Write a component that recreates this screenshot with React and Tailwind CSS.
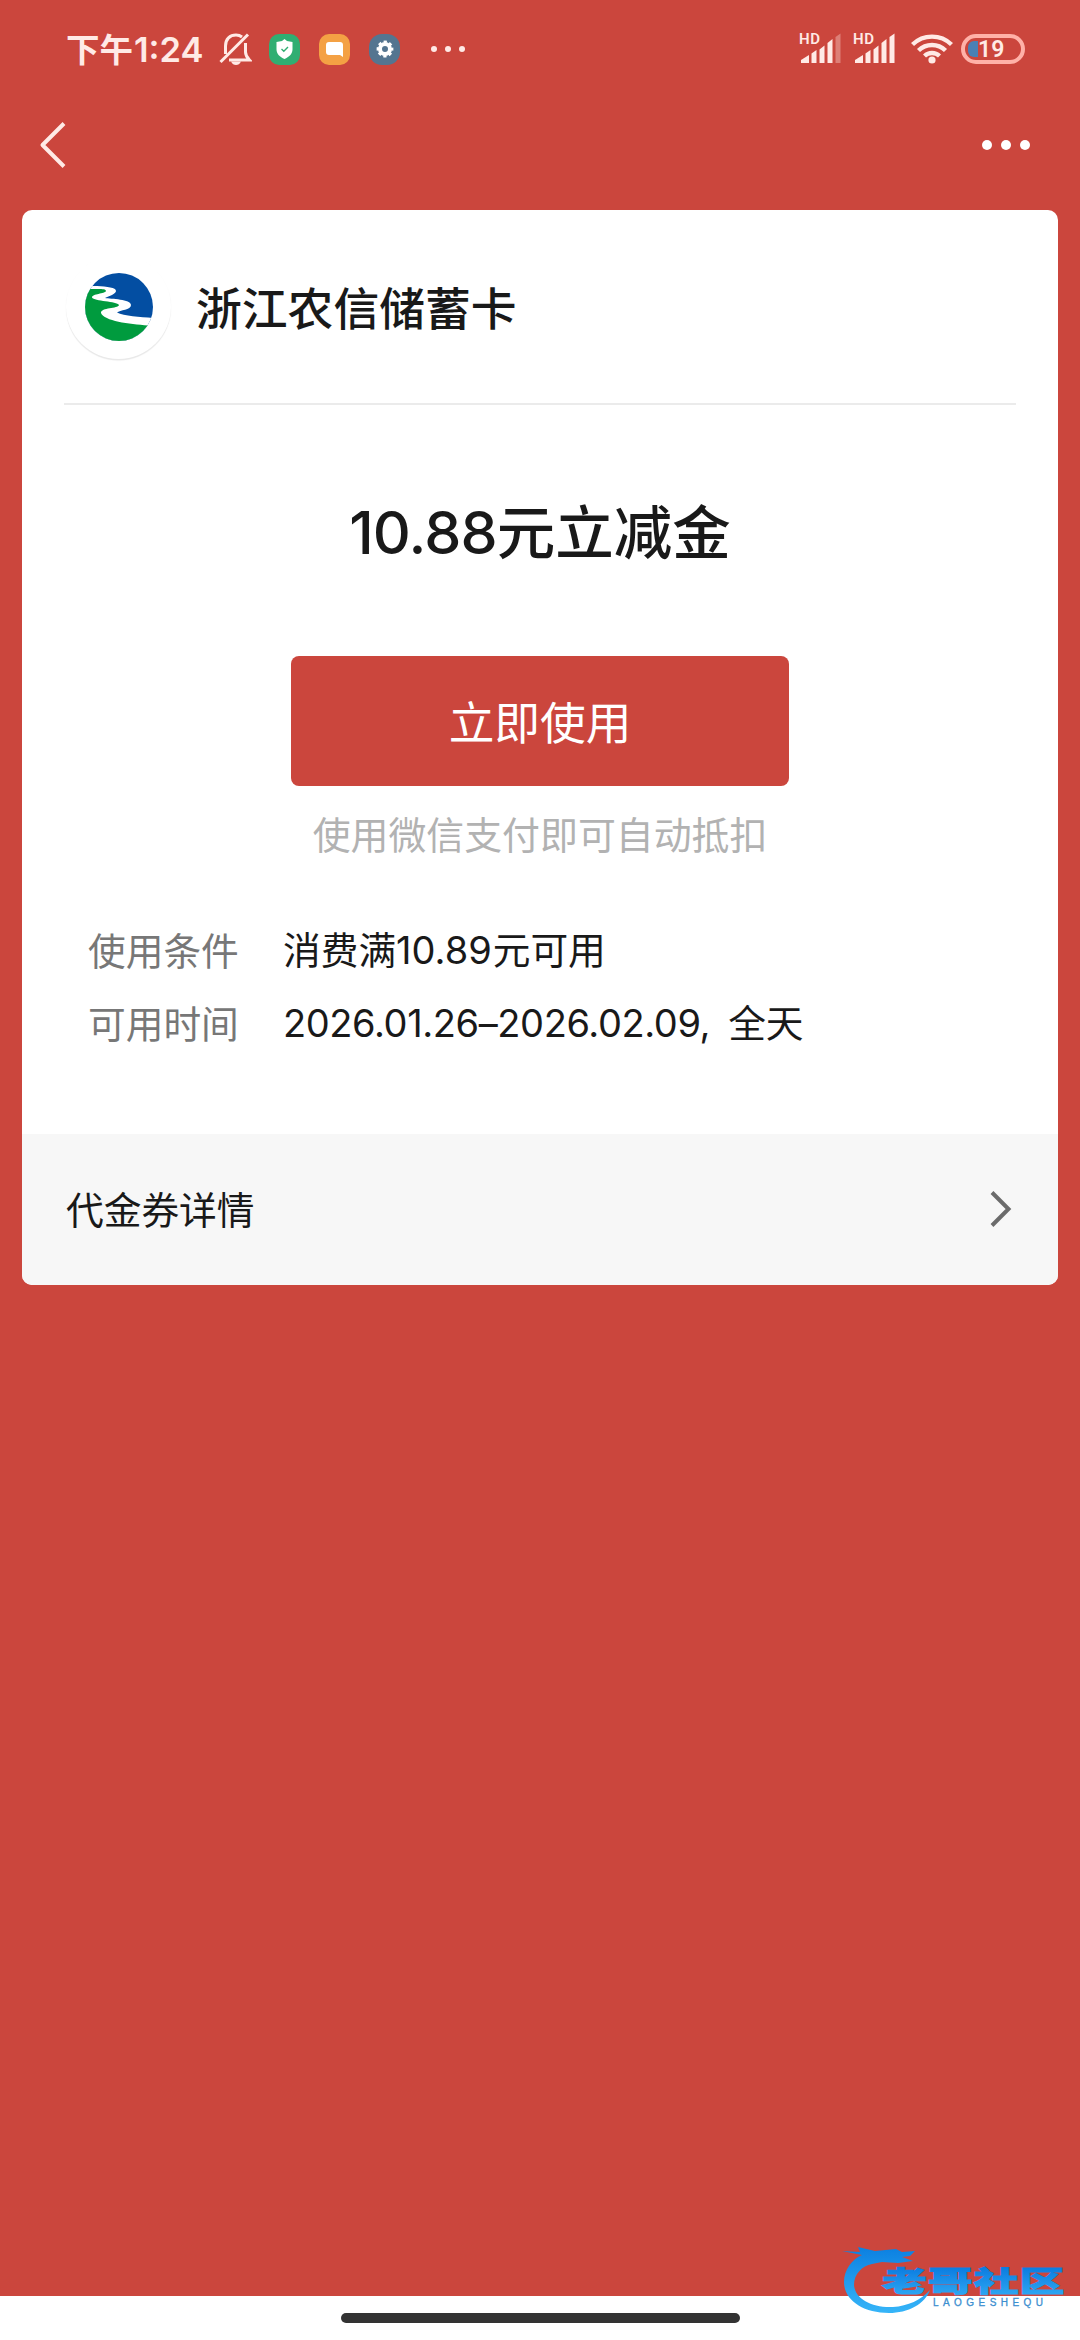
const details = [
  {
    label: "使用条件",
    parts: [
      { text: "消费满" },
      { text: "10.89", className: "font-[Inter,sans-serif] text-[38px]" },
      { text: "元可用", className: "ml-px" },
    ],
  },
  {
    label: "可用时间",
    parts: [
      { text: "2026.01.26–2026.02.09,", className: "font-[Inter,sans-serif] text-[38px] tracking-[-0.4px]" },
      { text: "全天", className: "ml-[18px]" },
    ],
  },
];

function Signal({ weak }) {
  return (
    <svg className="overflow-visible" width="44" height="34" viewBox="0 0 44 34" fill="#ffeae6">
      <text x="0" y="12" fontSize="15" fontWeight="600" fontFamily="Roboto, sans-serif" letterSpacing="0.6">
        HD
      </text>
      <path d="M2 31V28L10 23V31Z" />
      <path d="M12.500 31V21.500L17.500 18V31Z" />
      <path d="M20.500 31V17.500L25.500 13.500V31Z" />
      <path d="M28.500 31V11L33.500 7V31Z" />
      <path d="M36.500 31V5L41.500 1.500V31Z" opacity={weak ? 0.35 : 1} />
    </svg>
  );
}

function Wifi() {
  return (
    <svg width="42" height="32" viewBox="0 0 42 32" fill="none" stroke="#ffeae6" strokeWidth="4.400">
      <path d="M1.500 11.500A28 28 0 0 1 40.500 11.500" />
      <path d="M7.500 17.500A19.500 19.500 0 0 1 34.500 17.500" />
      <path d="M13.500 23A11 11 0 0 1 28.500 23" />
      <circle cx="21" cy="27" r="3.600" fill="#ffeae6" stroke="none" />
    </svg>
  );
}

function StatusBar() {
  return (
    <div className="flex h-[98px] items-center justify-between pr-[55px] pl-[66px]">
      <div className="flex items-center">
        <span className="flex w-[153px] items-baseline whitespace-nowrap text-[33.500px] leading-[40px] font-bold text-[#ffeae6]">
          <span className="font-['Noto_Sans_CJK_SC',sans-serif]">下午</span>
          <span className="ml-px font-[Inter,sans-serif] text-[34.500px] font-semibold">1:24</span>
        </span>
        <svg className="mr-[17px]" width="33" height="34" viewBox="0 0 33 34" fill="none" stroke="#ffeae6" strokeWidth="3">
          <path d="M6.500 22V14C6.500 7 11 3 17 3C19.500 3 21.500 3.800 23 5" />
          <path d="M26.500 11V20C26.500 23 28 25.500 30.500 28H10" />
          <path d="M1.500 30L29 2.500" />
          <path d="M12 29.500H22C21 32 19 33 17 33S13 32 12 29.500Z" fill="#ffeae6" stroke="none" />
        </svg>
        <span className="mr-[19px] flex size-[31px] items-center justify-center rounded-[10px] bg-[#30ae72]">
          <svg width="17" height="20" viewBox="0 0 17 20">
            <path d="M8.500 0L11 2L16.500 3V10.500C16.500 15 13 18 8.500 20C4 18 .5 15 .5 10.500V3L6 2Z" fill="#fff" />
            <path d="M5.500 10L7.800 12.200L12 8" fill="none" stroke="#30ae72" strokeWidth="1.400" />
          </svg>
        </span>
        <span className="mr-[19px] flex size-[31px] items-center justify-center rounded-[10px] bg-[#f4a144]">
          <svg width="17" height="15" viewBox="0 0 17 15">
            <path d="M3 0H14Q17 0 17 3V15L14 13H3Q0 13 0 10V3Q0 0 3 0Z" fill="#fff" />
          </svg>
        </span>
        <span className="mr-[31px] flex size-[31px] items-center justify-center rounded-[13px] bg-[#547590]">
          <svg width="18" height="18" viewBox="-9 -9 18 18">
            <circle r="5" fill="none" stroke="#fff" strokeWidth="4" />
            <circle r="7.200" fill="none" stroke="#fff" strokeWidth="2.400" strokeDasharray="3.200 2.455" strokeDashoffset="1.600" />
          </svg>
        </span>
        <div className="flex gap-[8px]">
          <i className="size-[6px] rounded-full bg-[#ffeae6]" />
          <i className="size-[6px] rounded-full bg-[#ffeae6]" />
          <i className="size-[6px] rounded-full bg-[#ffeae6]" />
        </div>
      </div>
      <div className="flex items-center">
        <Signal weak />
        <span className="w-[10px]" />
        <Signal />
        <span className="w-[14px]" />
        <Wifi />
        <div className="ml-[8px] flex h-[30px] w-[64px] items-center rounded-full border-4 border-[#ffb1a8] pl-[3px]">
          <span className="h-[16px] w-[10px] rounded-l-[6px] bg-[#4a80b5]" />
          <span className="font-[Roboto,sans-serif] text-[23px] leading-none font-semibold text-[#ffeae6]">19</span>
        </div>
      </div>
    </div>
  );
}

function NavBar() {
  return (
    <div className="flex h-[92px] justify-between pr-[50px] pl-[38px]">
      <svg className="mt-[22px]" width="30" height="50" viewBox="0 0 30 50" fill="none" stroke="#ffeae6" strokeWidth="4" strokeLinejoin="round">
        <path d="M26 3.500L4.500 25L26 46.500" />
      </svg>
      <div className="mt-[42px] flex gap-[9px]">
        <i className="size-[10px] rounded-full bg-white" />
        <i className="size-[10px] rounded-full bg-white" />
        <i className="size-[10px] rounded-full bg-white" />
      </div>
    </div>
  );
}

function BankLogo() {
  return (
    <div className="flex size-[105px] items-center justify-center rounded-full bg-white shadow-[0_1.5px_1px_#e8e8e8]">
      <svg width="68" height="68" viewBox="0 0 68 68">
        <clipPath id="disc">
          <circle cx="34" cy="34" r="34" />
        </clipPath>
        <g clipPath="url(#disc)">
          <rect width="68" height="68" fill="#034ea2" />
          <path d="M0 13H12C22 13.500 31 14.500 31 18C31 21 24 23 20 25C26 26 46 26 46 32C46 37 35 37 32 39.500C39 43 55 44 68 45V68H0Z" fill="#fff" />
          <path d="M0 16L9 16C14 16 21 15.500 21 18C20 21 7 20.500 7 24.500C9 28.500 32 28 34 32C33 36 16 34 16 40C19 48 44 51 63 52.500V68H0Z" fill="#009b3e" />
        </g>
      </svg>
    </div>
  );
}

function DetailRow({ label, parts }) {
  return (
    <div className="flex h-[73px] items-center">
      <span className="w-[195px] text-[37.700px] text-[#777]">{label}</span>
      <span className="flex items-baseline whitespace-nowrap text-[37.700px] text-[#191919]">
        {parts.map((part) => (
          <span key={part.text} className={part.className}>
            {part.text}
          </span>
        ))}
      </span>
    </div>
  );
}

function Watermark() {
  return (
    <svg className="absolute right-0 bottom-0" width="260" height="120" viewBox="0 0 260 120">
      <defs>
        <linearGradient id="wave" x1="0" y1="26" x2="0" y2="92" gradientUnits="userSpaceOnUse">
          <stop offset="0" stopColor="#0b7fe0" />
          <stop offset="1" stopColor="#35b4f8" />
        </linearGradient>
        <linearGradient id="ink" x1="0" y1="-25" x2="0" y2="3" gradientUnits="userSpaceOnUse">
          <stop offset="0" stopColor="#0a7be0" />
          <stop offset="1" stopColor="#2da6f2" />
        </linearGradient>
      </defs>
      <path
        d="M22 31L40 32L38 27L55 31L76 29L82 32L95 31L90 36L82 37L93 41L78 43L62 42L52 44C42 46 34 54 34 65C35 79 52 88 73 87C88 86 101 80 110 70C105 84 88 93 69 93C43 93 24 80 24 62C24 50 32 39 42 35Z"
        fill="url(#wave)"
      />
      {/* the name is set wide and flat */}
      <text
        transform="translate(62 72) scale(1.600 1)"
        fontSize="28"
        fontWeight="900"
        fontFamily="'Noto Sans CJK SC', sans-serif"
        textLength="114"
        fill="url(#ink)"
        stroke="url(#ink)"
        strokeWidth="1"
      >
        老哥社区
      </text>
      <text x="113" y="86" fontSize="10" fontFamily="'Liberation Sans', sans-serif" textLength="110" lengthAdjust="spacing" fill="#3d8fd0" stroke="#3d8fd0" strokeWidth="0.300">
        LAOGESHEQU
      </text>
    </svg>
  );
}

export default function App() {
  return (
    <div className="relative flex h-[2340px] w-[1080px] flex-col overflow-hidden bg-[#cb463d] font-['Noto_Sans_CJK_SC',sans-serif]">
      <StatusBar />
      <NavBar />

      <main className="mx-[22px] mt-[20px] flex h-[1075px] flex-col overflow-hidden rounded-[10px] bg-white">
        <header className="mx-[42px] flex h-[195px] items-center border-b-2 border-[#ebebeb] px-[2px]">
          <BankLogo />
          <h1 className="ml-[25px] text-[45.800px] leading-none font-medium text-[#191919]">浙江农信储蓄卡</h1>
        </header>

        <section className="flex flex-1 flex-col items-center">
          <p className="mt-[79px] flex h-[90px] items-baseline leading-[90px] font-medium text-[#191919]">
            <span className="font-[Inter,sans-serif] text-[59px] tracking-[-0.8px]">10.88</span>
            <span className="text-[58.500px]">元立减金</span>
          </p>
          <button className="mt-[82px] h-[130px] w-[498px] rounded-[8px] bg-[#cb463d] pb-[2px] text-[45.700px] text-white">
            立即使用
          </button>
          <p className="mt-[19px] text-[37.900px] leading-[56px] text-[#b2b2b2]">使用微信支付即可自动抵扣</p>
          <div className="mt-[52px] w-full pl-[66px]">
            {details.map((row) => (
              <DetailRow key={row.label} {...row} />
            ))}
          </div>
        </section>

        <footer className="flex h-[151px] items-center justify-between bg-[#f7f7f7] pr-[45px] pl-[44px]">
          <span className="pb-[2px] text-[37.700px] text-[#191919]">代金券详情</span>
          <svg className="mb-[2px]" width="24" height="40" viewBox="0 0 24 40" fill="none" stroke="#6b6b6b" strokeWidth="4">
            <path d="M3 3.500L19.500 20L3 36.500" />
          </svg>
        </footer>
      </main>

      <div className="mt-auto flex h-[44px] justify-center bg-white pt-[17px]">
        <div className="h-[10px] w-[399px] rounded-full bg-[#333]" />
      </div>
      <Watermark />
    </div>
  );
}
